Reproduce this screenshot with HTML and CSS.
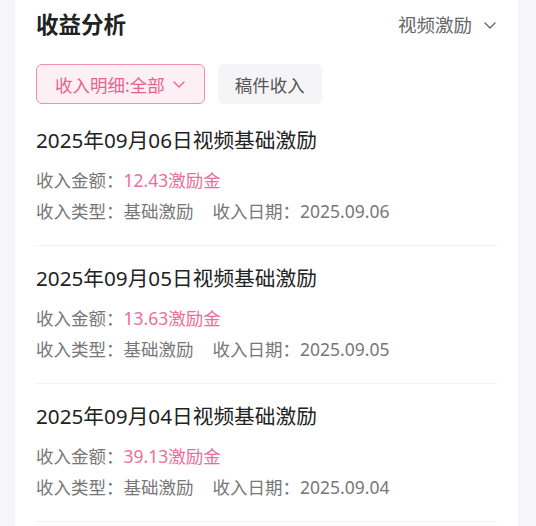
FILE: index.html
```html
<!DOCTYPE html>
<html lang="zh-CN">
<head>
  <meta charset="UTF-8">
  <meta name="viewport" content="width=device-width, initial-scale=1.0">
  <title>收益分析</title>
  <link rel="stylesheet" href="styles.css">
</head>
<body>
  <div class="card">
    <div class="header">
      <h2>收益分析</h2>
      <div class="picker">视频激励
        <svg class="chev" width="12" height="7" viewBox="0 0 12 7"><path d="M1 1l5 5 5-5" fill="none" stroke="#666" stroke-width="1.4" stroke-linecap="round" stroke-linejoin="round"/></svg>
      </div>
    </div>

    <div class="filters">
      <button class="chip active">收入明细:全部
        <svg width="12" height="7" viewBox="0 0 12 7"><path d="M1 1l5 5 5-5" fill="none" stroke="#e4648f" stroke-width="1.3" stroke-linecap="round" stroke-linejoin="round"/></svg>
      </button>
      <button class="chip">稿件收入</button>
    </div>

    <div class="list">
      <div class="item">
        <div class="item-title">2025年09月06日视频基础激励</div>
        <div class="row">收入金额：<span class="amount">12.43激励金</span></div>
        <div class="row">收入类型：基础激励<span class="gap"></span>收入日期：2025.09.06</div>
      </div>
      <div class="item">
        <div class="item-title">2025年09月05日视频基础激励</div>
        <div class="row">收入金额：<span class="amount">13.63激励金</span></div>
        <div class="row">收入类型：基础激励<span class="gap"></span>收入日期：2025.09.05</div>
      </div>
      <div class="item">
        <div class="item-title">2025年09月04日视频基础激励</div>
        <div class="row">收入金额：<span class="amount">39.13激励金</span></div>
        <div class="row">收入类型：基础激励<span class="gap"></span>收入日期：2025.09.04</div>
      </div>
    </div>
  </div>
</body>
</html>
```

FILE: styles.css
```css
body { margin: 0; background: #f6f6f8; font-family: "Noto Sans", "Noto Sans CJK SC", sans-serif; }
.card { margin-left: 15px; width: 503px; min-height: 526px; background: #fff; padding: 0 21px; box-sizing: border-box; }
.header { display: flex; align-items: center; justify-content: space-between; height: 50px; }
.header h2 { margin: 0; font-size: 22.5px; font-weight: 700; color: #222; line-height: 30px; }
.picker { display: flex; align-items: center; gap: 12px; font-size: 18.5px; color: #666; line-height: 24px; margin-right: 1px; }
.filters { display: flex; gap: 13px; margin-top: 14px; }
.chip { display: flex; align-items: center; gap: 8px; height: 40px; padding: 0 17px; font-family: inherit; font-size: 17.5px; color: #555; background: #f5f5f7; border: none; border-radius: 6px; }
.chip.active { padding: 0 19px 0 18px; color: #e4648f; background: #fdf0f4; border: 1px solid #f08fae; }
.list { margin-top: 4px; }
.item { padding: 18px 0 22px; border-bottom: 1px solid #f2f2f4; }
.item-title { font-size: 20.7px; color: #222; line-height: 28px; }
.row { font-size: 17.5px; color: #777; line-height: 24px; margin-top: 7px; }
.row:nth-child(2) { margin-top: 14px; }
.amount { color: #ec6e98; }
.gap { display: inline-block; width: 19px; }
```
